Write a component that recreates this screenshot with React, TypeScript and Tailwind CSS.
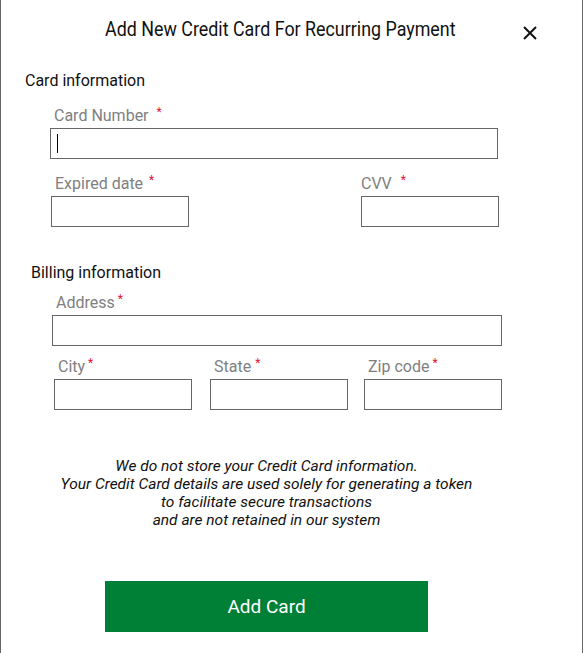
import React from "react";

const Star = ({ gap }: { gap: string }) => (
  <span className={`${gap} relative top-0 align-top text-[12px] leading-none text-[#dc143c]`}>*</span>
);

const Field = ({ className }: { className: string }) => (
  <input type="text" className={`${className} block h-[31px] border border-[#666666] bg-white outline-none`} />
);

export default function App() {
  return (
    <div
      className="relative min-h-[653px] w-[583px] border-x border-[#666666] bg-white text-[#111111]"
      style={{ fontFamily: "Roboto, 'Noto Sans', sans-serif" }}
    >
      <div className="w-[531px]">
        <div className="pt-[15px] pl-[27px] text-center text-[20px] leading-[28px] text-[#111111]">
          <span className="inline-block scale-x-[0.893]">Add New Credit Card For Recurring Payment</span>
        </div>

        <div className="mt-[28px] pl-[24px] text-[16px] leading-[20px]">Card information</div>

        <div className="mt-[15px] pl-[53px] text-[16px] leading-[20px] text-[#808080]">
          Card Number<Star gap="ml-[8px]" />
        </div>
        <div className="relative mt-[2px] ml-[49px] w-[448px]">
          <Field className="w-[448px]" />
          <span className="absolute left-[7px] top-[6px] h-[19px] w-px bg-black" />
        </div>

        <div className="mt-[15px] flex">
          <div className="ml-[50px] w-[310px]">
            <div className="pl-[4px] text-[16px] leading-[20px] text-[#808080]">
              Expired date<Star gap="ml-[6px]" />
            </div>
            <Field className="mt-[2px] w-[138px]" />
          </div>
          <div>
            <div className="text-[16px] leading-[20px] text-[#808080]">
              CVV<Star gap="ml-[9px]" />
            </div>
            <Field className="mt-[2px] w-[138px]" />
          </div>
        </div>

        <div className="mt-[36px] pl-[30px] text-[16px] leading-[20px]">Billing information</div>

        <div className="mt-[10px] pl-[55px] text-[16px] leading-[20px] text-[#808080]">
          Address<Star gap="ml-[3px]" />
        </div>
        <Field className="mt-[2px] ml-[51px] w-[450px]" />

        <div className="mt-[11px] ml-[53px] flex">
          <div className="w-[138px]">
            <div className="pl-[4px] text-[16px] leading-[20px] text-[#808080]">
              City<Star gap="ml-[3px]" />
            </div>
            <Field className="mt-[2px] w-[138px]" />
          </div>
          <div className="ml-[18px] w-[138px]">
            <div className="pl-[4px] text-[16px] leading-[20px] text-[#808080]">
              State<Star gap="ml-[4px]" />
            </div>
            <Field className="mt-[2px] w-[138px]" />
          </div>
          <div className="ml-[16px] w-[138px]">
            <div className="pl-[4px] text-[16px] leading-[20px] text-[#808080]">
              Zip code<Star gap="ml-[3px]" />
            </div>
            <Field className="mt-[2px] w-[138px]" />
          </div>
        </div>

        <p className="mt-[47px] text-center text-[15.5px] italic leading-[18px] text-[#111111]">
          We do not store your Credit Card information.
          <br />
          Your Credit Card details are used solely for generating a token
          <br />
          to facilitate secure transactions
          <br />
          and are not retained in our system
        </p>

        <button
          type="button"
          className="mx-auto mt-[52px] block h-[51px] w-[323px] bg-[#008037] text-[19px] leading-none text-white"
        >
          Add Card
        </button>
      </div>

      <button type="button" aria-label="Close" className="absolute left-[522px] top-[26px] block h-[14px] w-[14px]">
        <svg width="14" height="14" viewBox="0 0 14 14" className="block">
          <path d="M1 1 L13 13 M13 1 L1 13" stroke="#111111" strokeWidth="2" strokeLinecap="butt" fill="none" />
        </svg>
      </button>
    </div>
  );
}
